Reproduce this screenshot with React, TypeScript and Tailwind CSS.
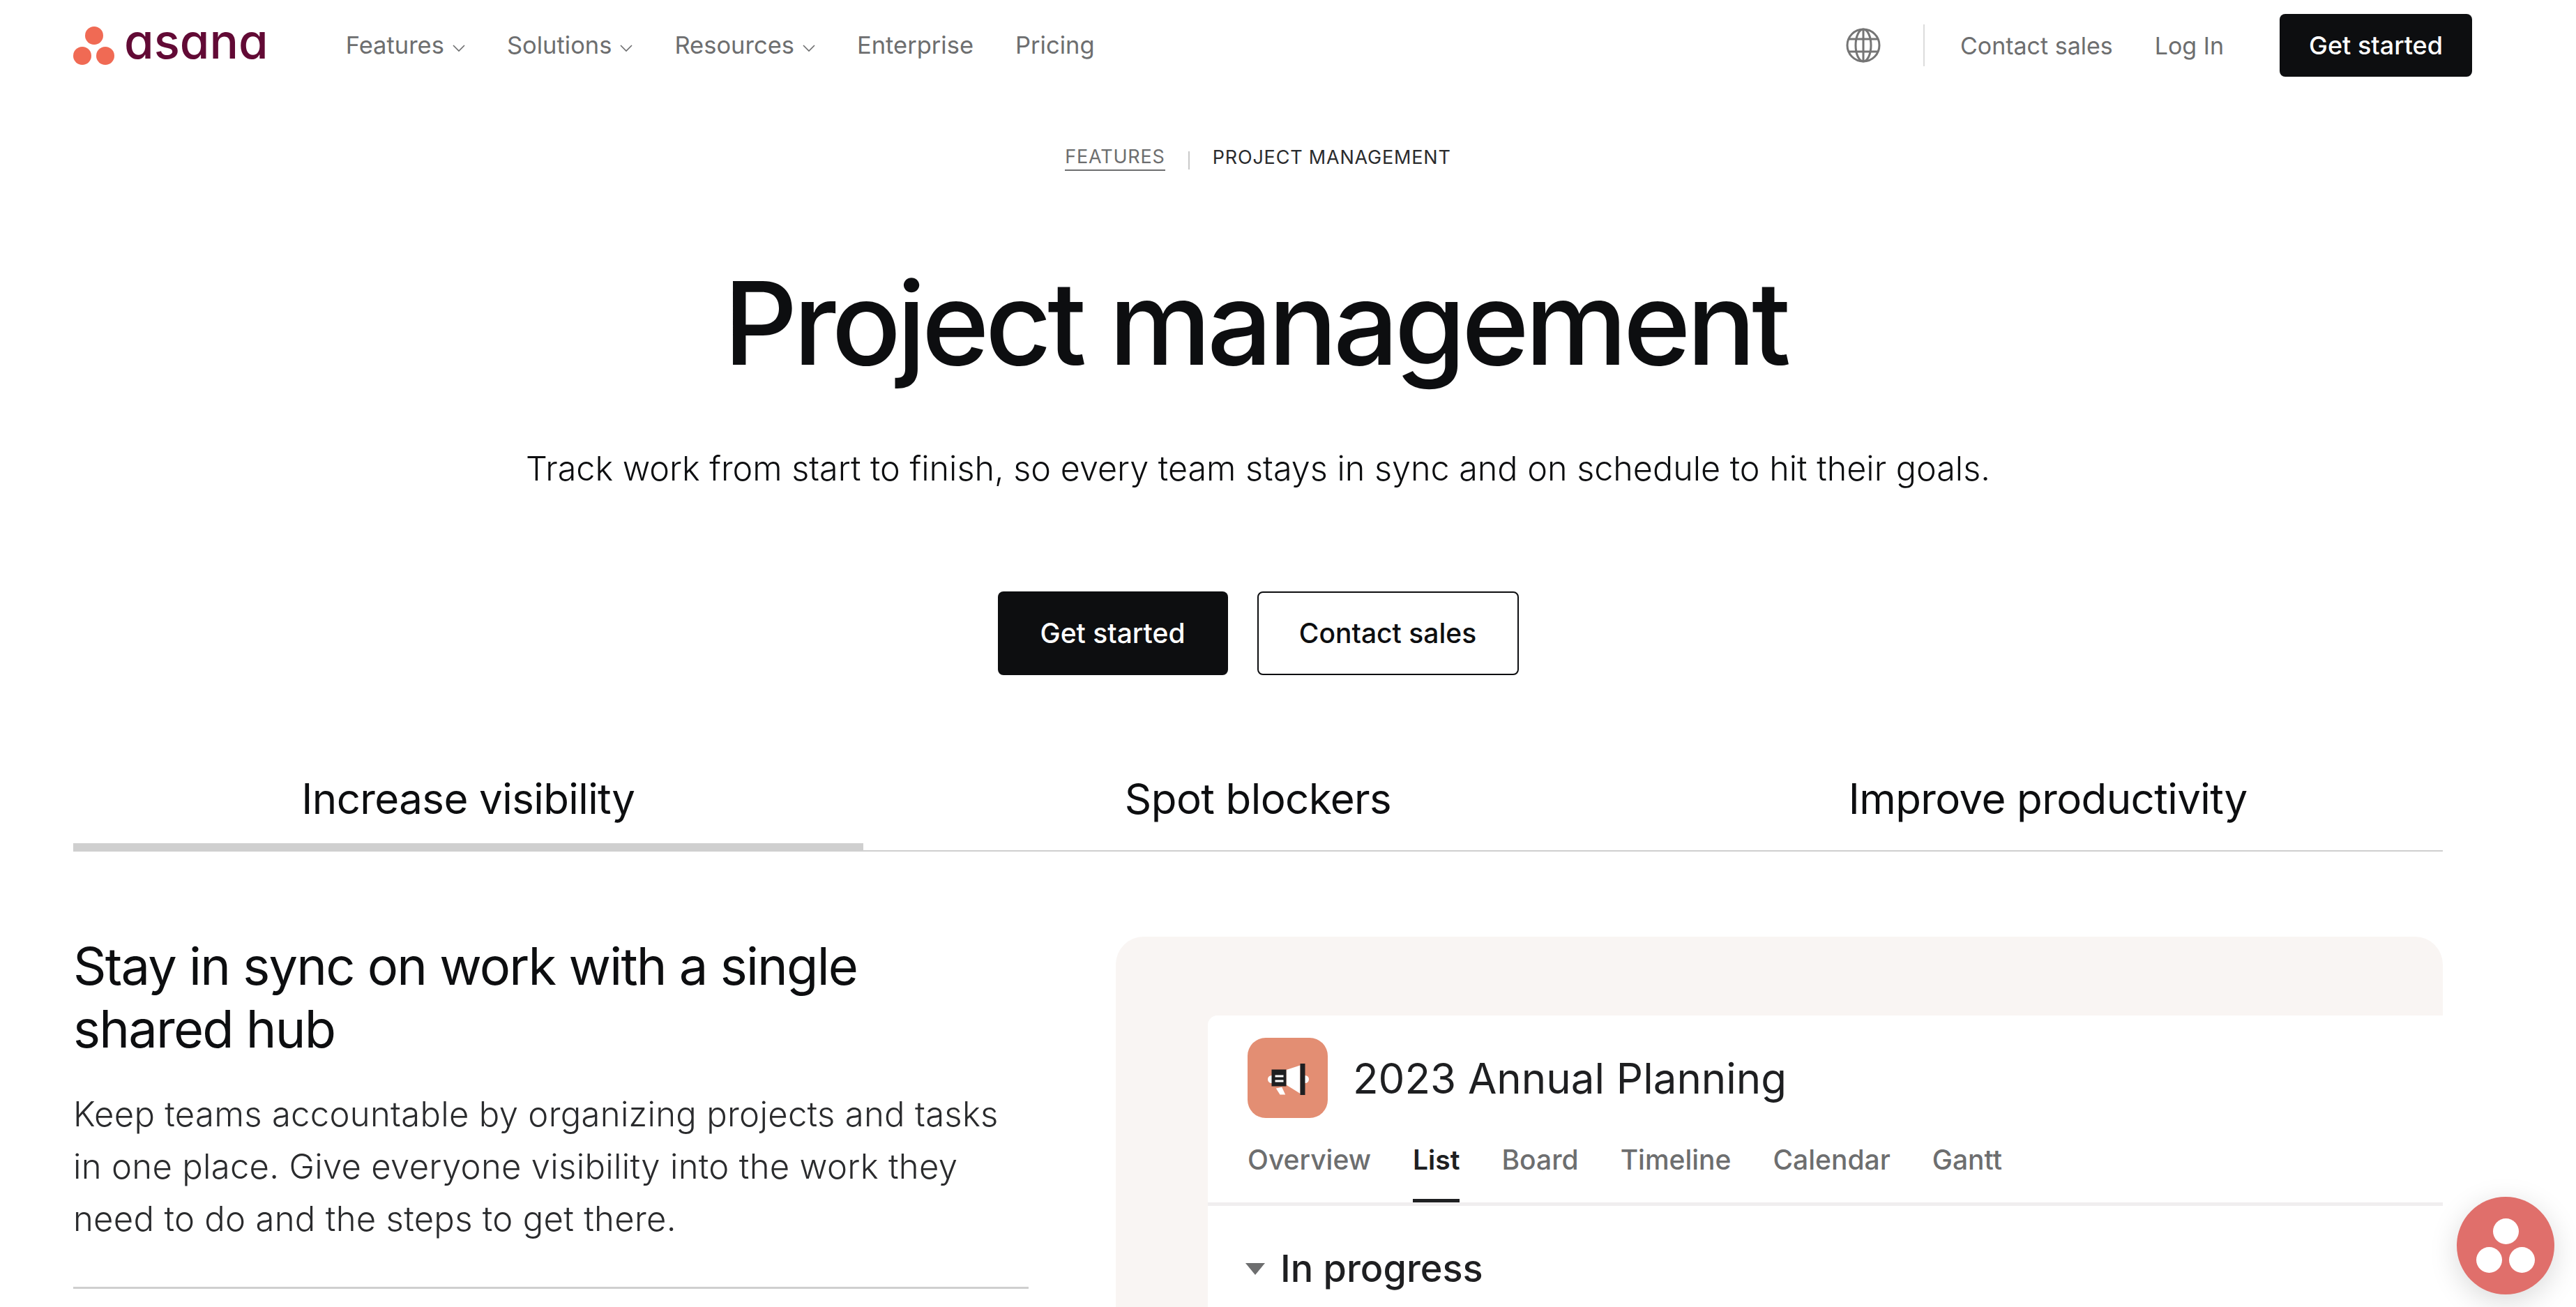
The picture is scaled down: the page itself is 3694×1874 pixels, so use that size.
const navLinks = [
  { label: 'Features', menu: true },
  { label: 'Solutions', menu: true },
  { label: 'Resources', menu: true },
  { label: 'Enterprise', menu: false },
  { label: 'Pricing', menu: false },
];

const heroTabs = ['Increase visibility', 'Spot blockers', 'Improve productivity'];
const projectTabs = ['Overview', 'List', 'Board', 'Timeline', 'Calendar', 'Gantt'];

function LogoDots() {
  return (
    <svg width="60" height="55" viewBox="0 0 60 55" className="shrink-0">
      <circle cx="30" cy="13" r="13" fill="#f06a54" />
      <circle cx="13" cy="42" r="13" fill="#f06a54" />
      <circle cx="46" cy="42" r="13" fill="#f06a54" />
    </svg>
  );
}

function Globe() {
  return (
    <svg width="50" height="50" viewBox="0 0 50 50" fill="none" stroke="#757575" strokeWidth="3">
      <circle cx="25" cy="25" r="23" />
      <ellipse cx="25" cy="25" rx="11" ry="23" />
      <path d="M25 2v46M4 16h42M4 34h42" />
    </svg>
  );
}

function Chevron() {
  return (
    <svg width="18" height="11" viewBox="0 0 18 11" fill="none" stroke="#6d6e6f" strokeWidth="1.6" className="mt-[8px]">
      <path d="M1 1l8 8 8-8" />
    </svg>
  );
}

function Megaphone() {
  return (
    <svg width="60" height="48" viewBox="0 0 60 48" className="shrink-0">
      <circle cx="6.5" cy="25.5" r="5.5" fill="#fff" />
      <circle cx="54.5" cy="25.5" r="5.5" fill="#fff" />
      <path d="M12.8 38.5L21.2 36.8 26.2 47.5H18.5z" fill="#fff" />
      <path d="M27.5 12L47.5 5.5V46L27.5 33.5z" fill="#fff" />
      <rect x="6.5" y="11.5" width="21" height="24" fill="#1e1f21" />
      <rect x="11.5" y="19.5" width="12" height="3" fill="#fff" />
      <rect x="11.5" y="26.5" width="12" height="3" fill="#fff" />
      <rect x="47.5" y="3" width="7" height="45" fill="#1e1f21" />
    </svg>
  );
}

export default function App() {
  return (
    <div className="relative h-screen overflow-hidden bg-white font-['Inter',sans-serif] text-[#0d0e10]">
      <header className="flex h-[130px] items-center pl-[105px] pr-[149px]">
        <a className="flex items-center gap-[13px]">
          <LogoDots />
          <span className="mb-[12px] text-[69px] leading-none font-medium text-[#620a35] [font-feature-settings:'cv11']">asana</span>
        </a>
        <nav className="ml-[111px] flex items-center gap-[60px] text-[34.5px] text-[#6d6e6f]">
          {navLinks.map((link) => (
            <a key={link.label} className="flex items-center gap-[12px]">
              {link.label}
              {link.menu && <Chevron />}
            </a>
          ))}
        </nav>
        <div className="ml-auto flex items-center text-[34px] text-[#6d6e6f]">
          <Globe />
          <span className="mx-[61px] h-[60px] w-[2px] bg-[#dcdcdc]" />
          <a className="mr-[60px] -ml-[10px]">Contact sales</a>
          <a>Log In</a>
          <button type="button" className="ml-[80px] h-[90px] w-[276px] rounded-[8px] bg-[#0d0e10] text-[36px] font-medium text-white">
            Get started
          </button>
        </div>
      </header>

      <div className="mr-[191px] ml-[105px]">
        <div className="mt-[76px] flex items-center justify-center text-[27px] leading-[40px] tracking-[0.03em]">
          <a className="border-b-[2px] border-[#6d6e6f] leading-[36px] text-[#6d6e6f]">FEATURES</a>
          <span className="mx-[33px] mt-[8px] h-[26px] w-[2px] bg-[#c9c9c9]" />
          <span className="text-[#2a2b2d]">PROJECT MANAGEMENT</span>
        </div>

        <h1 className="mt-[102px] pr-[8px] text-center text-[165px] leading-[230px] font-medium tracking-[-0.036em]">Project management</h1>

        <p className="mt-[59px] text-center text-[48.5px] leading-[70px] font-light">
          Track work from start to finish, so every team stays in sync and on schedule to hit their goals.
        </p>

        <div className="mt-[141px] flex justify-center gap-[42px] text-[39px] font-medium">
          <button type="button" className="h-[120px] w-[330px] rounded-[8px] bg-[#0d0e10] text-white">Get started</button>
          <button type="button" className="h-[120px] w-[375px] rounded-[8px] border-[2px] border-[#0d0e10]">Contact sales</button>
        </div>

        <div className="mt-[90px] grid grid-cols-3 border-b-[2px] border-[#cfcfcf]">
          {heroTabs.map((tab, i) => (
            <div key={tab} className="relative h-[161px] pt-[47px] text-center text-[60px] leading-[80px] tracking-[-0.01em]">
              {tab}
              {i === 0 && <span className="absolute right-0 -bottom-[2px] left-0 h-[12px] bg-[#cfcfcf]" />}
            </div>
          ))}
        </div>

        <div className="mt-[122px] grid grid-cols-[1370px_1fr] gap-[125px]">
          <div className="-mt-[3px]">
            <h2 className="text-[74px] leading-[90px] tracking-[-0.024em]">
              Stay in sync on work with a single shared hub
            </h2>
            <p className="mt-[40px] text-[49px] leading-[75px] font-light tracking-[0.006em] text-[#2a2b2d]">
              Keep teams accountable by organizing projects and tasks in one place. Give everyone visibility into the work they need to do and the steps to get there.
            </p>
            <div className="mt-[60px] h-[3px] bg-[#cfcfcf]" />
          </div>
          <div className="h-[800px] rounded-t-[40px] bg-[#f9f5f3] pt-[113px] pl-[132px]">
            <div className="h-full rounded-tl-[14px] bg-white">
              <div className="flex items-center gap-[36px] pt-[32px] pl-[57px]">
                <div className="flex h-[115px] w-[115px] items-center justify-center rounded-[26px] bg-[#e38e73]">
                  <Megaphone />
                </div>
                <span className="text-[60px] leading-none text-[#1e1f21]">2023 Annual Planning</span>
              </div>
              <div className="mt-[33px] flex gap-[60px] border-b-[5px] border-[#f0eeef] pl-[57px] text-[39px] font-medium text-[#6d6e6f]">
                {projectTabs.map((tab) => (
                  <span
                    key={tab}
                    className={`relative h-[88px] leading-[54px] ${tab === 'List' ? 'font-semibold text-[#1e1f21]' : ''}`}
                  >
                    {tab}
                    {tab === 'List' && <span className="absolute right-0 bottom-0 left-0 h-[5px] bg-[#1e1f21]" />}
                  </span>
                ))}
              </div>
              <div className="mt-[63px] flex items-center gap-[22px] pl-[54px]">
                <span className="h-0 w-0 border-x-[14px] border-t-[17px] border-x-transparent border-t-[#6d6e6f]" />
                <span className="text-[54px] leading-none font-medium text-[#1e1f21]">In progress</span>
              </div>
            </div>
          </div>
        </div>
      </div>

      <div className="absolute top-[1716px] left-[3523px] h-[140px] w-[140px] rounded-full bg-[#e06f6b] shadow-[0_10px_40px_rgba(0,0,0,0.15)]">
        <span className="absolute top-[31px] left-[52px] h-[37px] w-[37px] rounded-full bg-white" />
        <span className="absolute top-[72px] left-[28px] h-[37px] w-[37px] rounded-full bg-white" />
        <span className="absolute top-[72px] left-[75px] h-[37px] w-[37px] rounded-full bg-white" />
      </div>
    </div>
  );
}
